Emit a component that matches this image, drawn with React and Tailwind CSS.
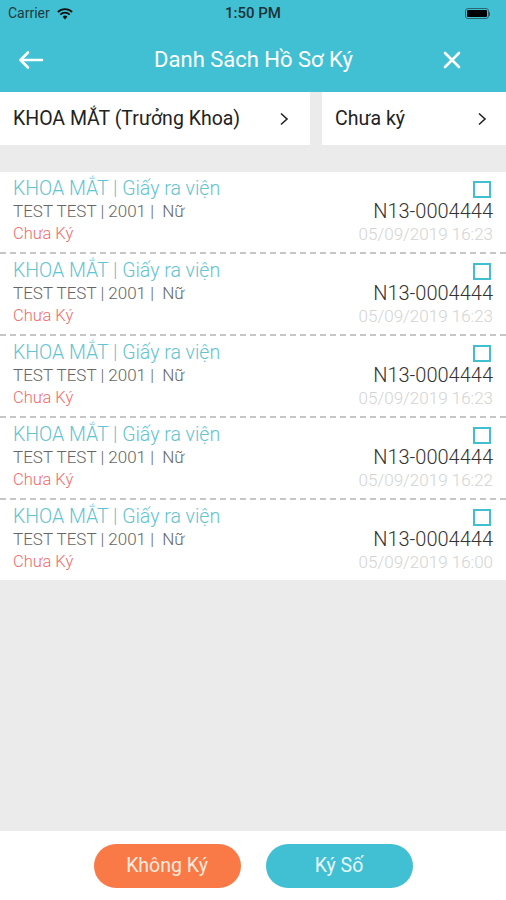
import React from 'react';

const font = { fontFamily: 'Roboto, "Noto Sans", sans-serif' };

const records = [
  { date: '05/09/2019 16:23' },
  { date: '05/09/2019 16:23' },
  { date: '05/09/2019 16:23' },
  { date: '05/09/2019 16:22' },
  { date: '05/09/2019 16:00' },
];

const Chevron = () => (
  <svg width="12" height="16" viewBox="0 0 12 16" fill="none" stroke="#222" strokeWidth="1.6">
    <path d="M3 2.5 L9 8 L3 13.5" />
  </svg>
);

const RecordRow = ({ date, last }) => (
  <div>
    <div className="flex justify-between pl-[13px] pr-[13px] pt-[6px] pb-[8px]">
      <div className="flex flex-col">
        <div className="h-[22px] leading-[22px] text-[19.5px] text-[#62c3d2] font-light">KHOA MẮT | Giấy ra viện</div>
        <div className="h-[22px] leading-[22px] text-[17px] text-[#666] font-light">TEST TEST | 2001 |&nbsp; Nữ</div>
        <div className="h-[22px] leading-[24px] text-[16.5px] text-[#f26a6a] font-light">Chưa Ký</div>
      </div>
      <div className="flex flex-col items-end">
        <div className="h-[22px] flex items-center pr-[2px]">
          <div className="w-[18px] h-[17px] border-2 border-[#3fbfd0]" />
        </div>
        <div className="h-[22px] leading-[22px] text-[20px] text-[#333] font-light">N13-0004444</div>
        <div className="h-[22px] leading-[24px] text-[17px] text-[#d3d3d3] font-light">{date}</div>
      </div>
    </div>
    {!last && (
      <div className="h-[2px] bg-[repeating-linear-gradient(90deg,#c6c6c6_0px,#c6c6c6_6px,transparent_6px,transparent_10px)]" />
    )}
  </div>
);

export default function App() {
  return (
    <div className="w-[506px] h-[900px] flex flex-col bg-[#ebebeb] overflow-hidden" style={font}>
      {/* status bar + nav */}
      <div className="bg-[#42c0d3]">
        <div className="h-[27px] relative flex items-center px-[8px]">
          <span className="text-[14px] text-[#1d3a40]">Carrier</span>
          <svg className="ml-[7px]" width="16" height="12" viewBox="0 0 16 12">
            <path d="M8 11.5 L5.6 8.8 A3.4 3.4 0 0 1 10.4 8.8 Z" fill="#111" />
            <path d="M3.3 6.6 A6.6 6.6 0 0 1 12.7 6.6" stroke="#111" strokeWidth="1.8" fill="none" />
            <path d="M0.9 4 A10 10 0 0 1 15.1 4" stroke="#111" strokeWidth="1.8" fill="none" />
          </svg>
          <span className="absolute left-0 right-0 text-center text-[15px] font-medium text-[#1a3338]">1:50 PM</span>
          <div className="ml-auto mr-[8px] flex items-center">
            <div className="w-[24px] h-[11px] rounded-[3px] border border-[#2a6570] p-[1px]">
              <div className="w-full h-full bg-black rounded-[1px]" />
            </div>
            <div className="w-[1.5px] h-[4px] bg-[#2a6570]" />
          </div>
        </div>
        <div className="h-[65px] flex items-center justify-between px-[18px]">
          <svg width="26" height="20" viewBox="0 0 26 20" fill="none" stroke="#fff" strokeWidth="2.6" strokeLinecap="round" strokeLinejoin="round">
            <path d="M24 10 H3 M10 2.5 L2.5 10 L10 17.5" />
          </svg>
          <div className="text-white text-[22px] ml-[20px]">Danh Sách Hồ Sơ Ký</div>
          <svg className="mr-[27px]" width="18" height="18" viewBox="0 0 18 18" stroke="#fff" strokeWidth="2.6" strokeLinecap="round">
            <path d="M2 2 L16 16 M16 2 L2 16" />
          </svg>
        </div>
      </div>

      {/* filters */}
      <div className="flex h-[53px] gap-[12px]">
        <div className="w-[310px] bg-white flex items-center justify-between pl-[13px] pr-[20px]">
          <span className="text-[19.5px] text-[#222]">KHOA MẮT (Trưởng Khoa)</span>
          <Chevron />
        </div>
        <div className="flex-1 bg-white flex items-center justify-between pl-[13px] pr-[18px]">
          <span className="text-[19.5px] text-[#222]">Chưa ký</span>
          <Chevron />
        </div>
      </div>

      {/* list */}
      <div className="mt-[27px] bg-white">
        {records.map((r, i) => (
          <RecordRow key={i} date={r.date} last={i === records.length - 1} />
        ))}
      </div>

      <div className="flex-1" />

      {/* actions */}
      <div className="h-[69px] bg-white flex items-center justify-center gap-[25px] pt-[1px]">
        <button className="w-[147px] h-[44px] rounded-full bg-[#f97a46] text-[#fde9de] text-[19.5px]">Không Ký</button>
        <button className="w-[147px] h-[44px] rounded-full bg-[#41c0d3] text-[#e6f7fa] text-[19.5px]">Ký Số</button>
      </div>
    </div>
  );
}
